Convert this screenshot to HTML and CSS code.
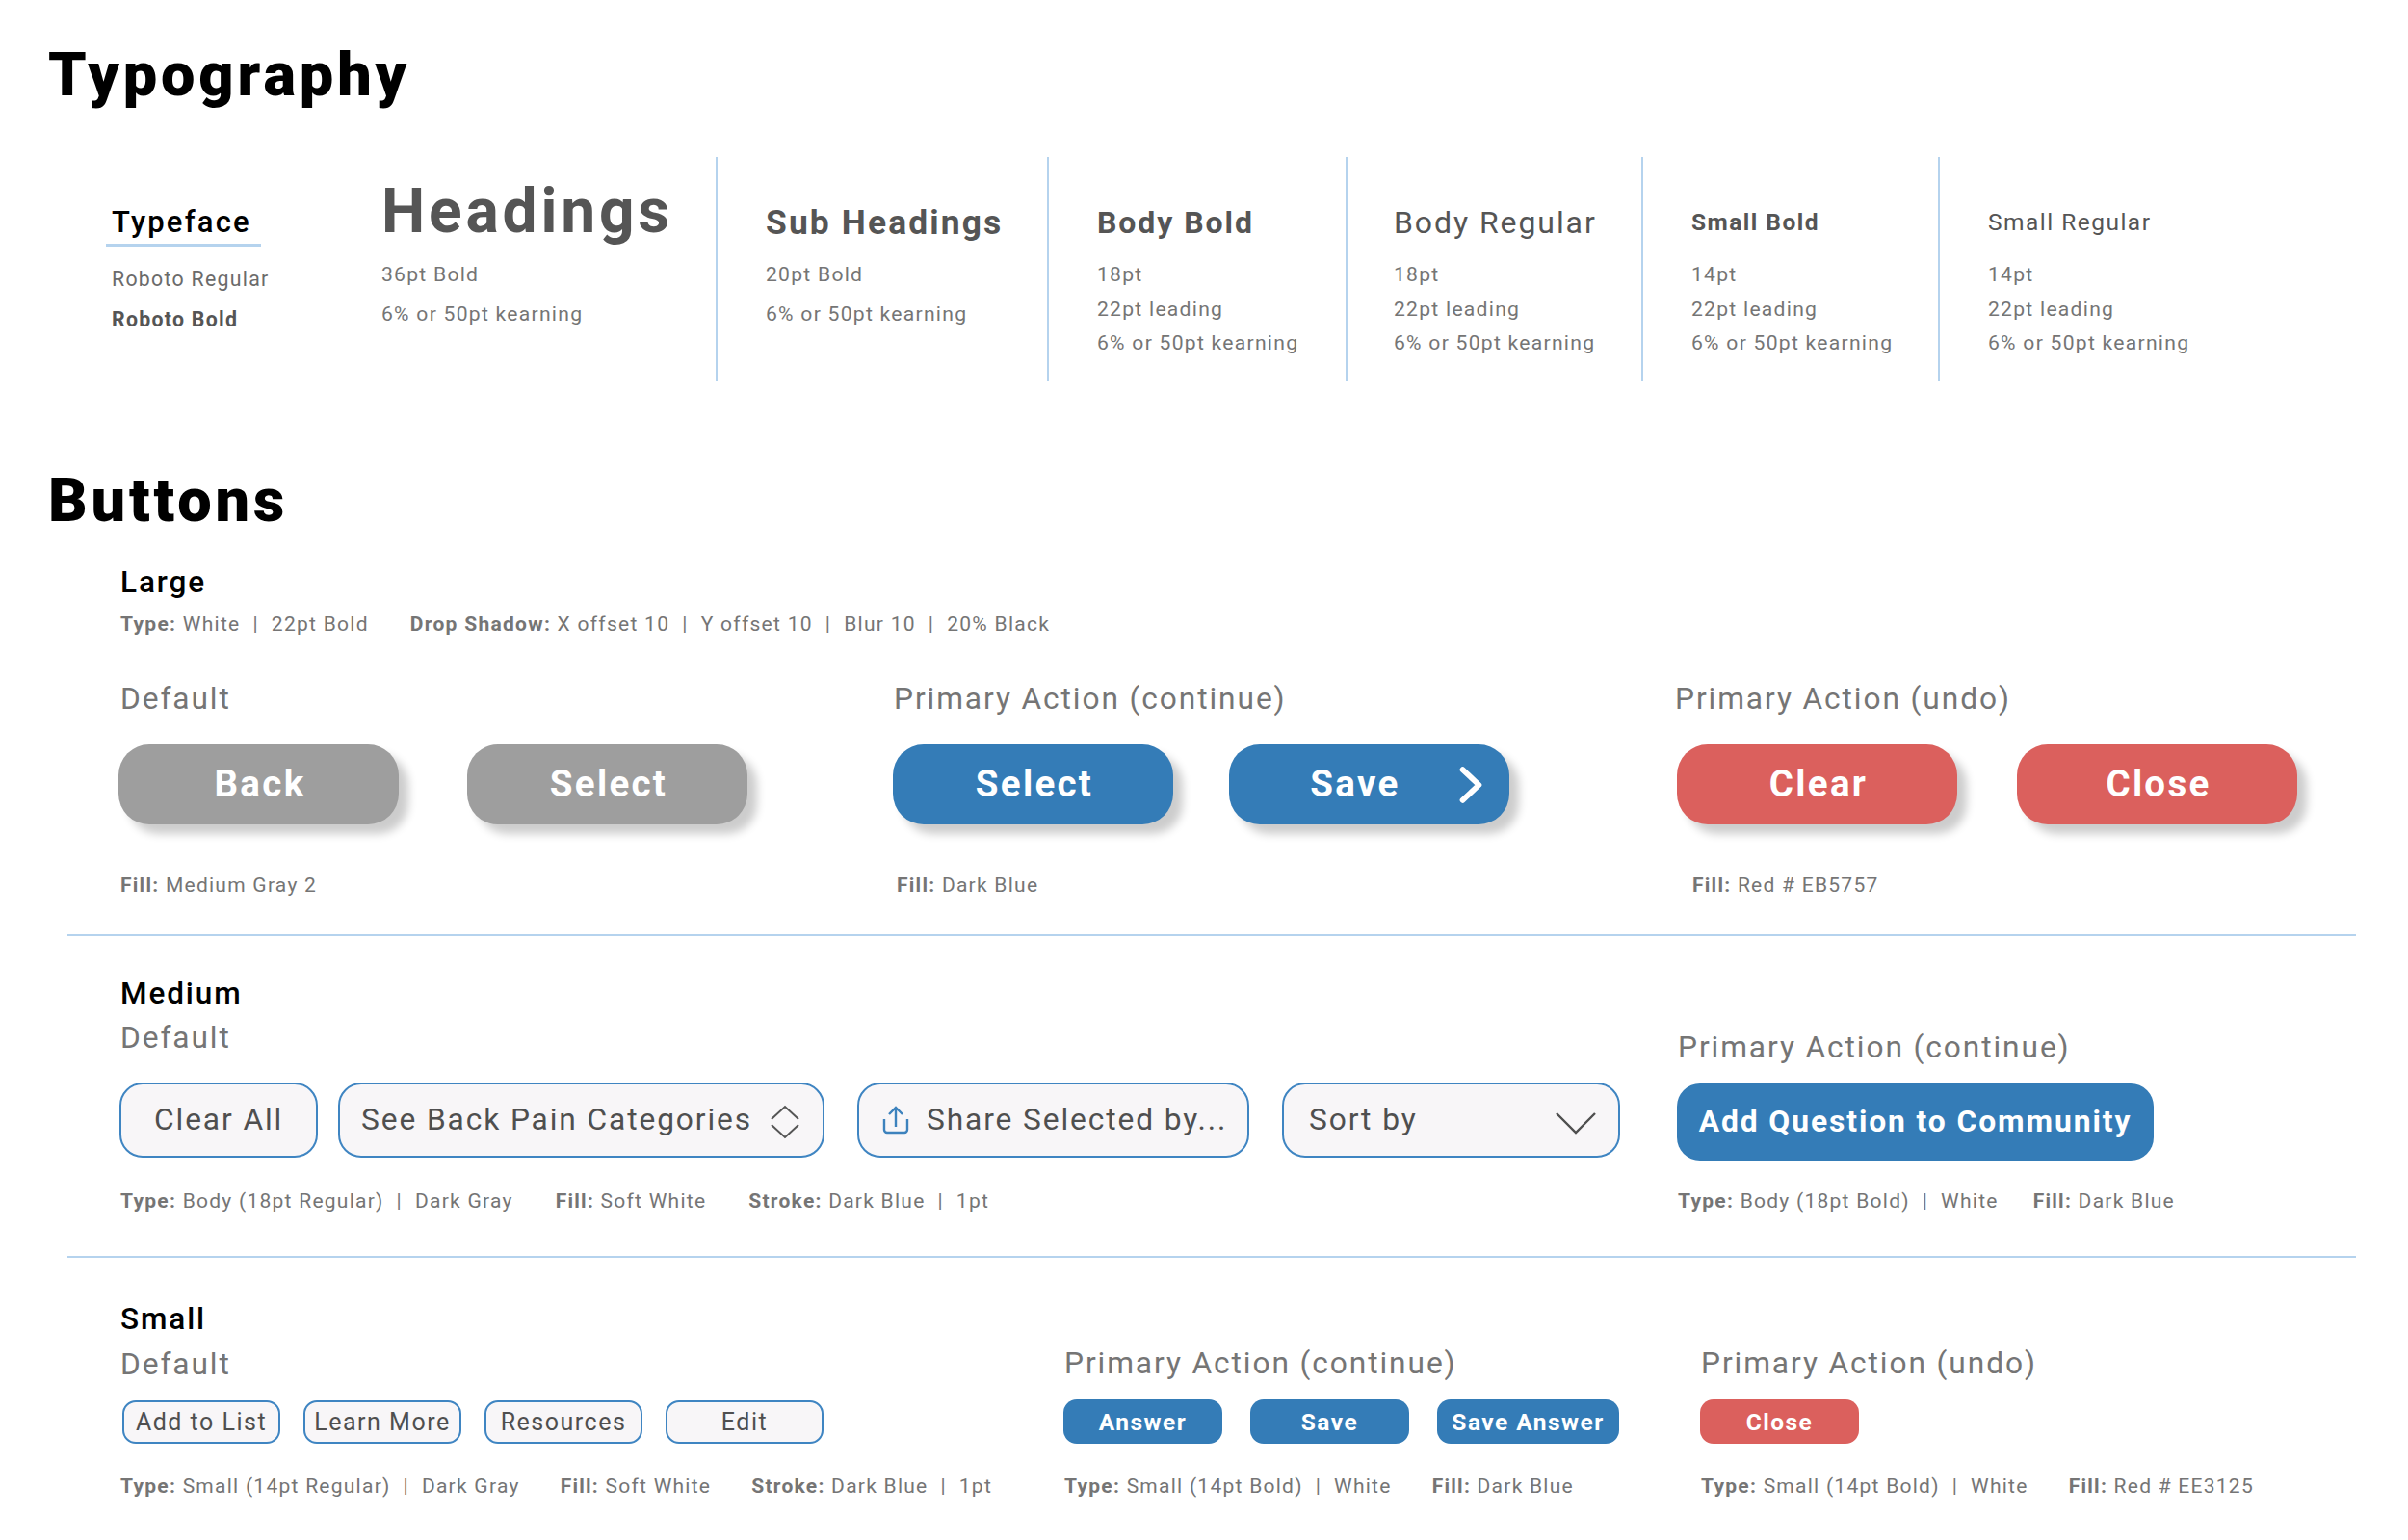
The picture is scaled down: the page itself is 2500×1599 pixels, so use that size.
FILE: index.html
```html
<!DOCTYPE html>
<html lang="en">
<head>
<meta charset="utf-8">
<title>Typography and Buttons</title>
<link rel="stylesheet" href="styles.css">
</head>
<body>
<main class="page">
  <h1 class="title title-first">Typography</h1>
  <section class="type-row">
    <div class="type-col type-face">
      <div class="face-head">Typeface</div>
      <p class="face-line">Roboto Regular</p>
      <p class="face-line face-bold">Roboto Bold</p>
    </div>
    <div class="type-col type-head">
      <div class="sample-h1">Headings</div>
      <p class="spec spec-wide">36pt Bold</p>
      <p class="spec spec-wide">6% or 50pt kearning</p>
    </div>
    <div class="type-col divided">
      <div class="sample-h2">Sub Headings</div>
      <p class="spec spec-wide">20pt Bold</p>
      <p class="spec spec-wide">6% or 50pt kearning</p>
    </div>
    <div class="type-col divided">
      <div class="sample-body sample-bold">Body Bold</div>
      <p class="spec">18pt</p>
      <p class="spec">22pt leading</p>
      <p class="spec">6% or 50pt kearning</p>
    </div>
    <div class="type-col divided divided-tight">
      <div class="sample-body">Body Regular</div>
      <p class="spec">18pt</p>
      <p class="spec">22pt leading</p>
      <p class="spec">6% or 50pt kearning</p>
    </div>
    <div class="type-col divided">
      <div class="sample-small sample-bold">Small Bold</div>
      <p class="spec">14pt</p>
      <p class="spec">22pt leading</p>
      <p class="spec">6% or 50pt kearning</p>
    </div>
    <div class="type-col divided">
      <div class="sample-small">Small Regular</div>
      <p class="spec">14pt</p>
      <p class="spec">22pt leading</p>
      <p class="spec">6% or 50pt kearning</p>
    </div>
  </section>

  <h1 class="title title-second">Buttons</h1>

  <section class="band band-large">
    <h2 class="size-name size-large">Large</h2>
    <p class="note note-top"><span><b>Type:</b> White &nbsp;|&nbsp; 22pt Bold</span><span><b>Drop Shadow:</b> X offset 10 &nbsp;|&nbsp; Y offset 10 &nbsp;|&nbsp; Blur 10 &nbsp;|&nbsp; 20% Black</span></p>
    <div class="large-grid">
      <div>
        <h3 class="state state-default">Default</h3>
        <div class="btns gap-gray">
          <button class="btn-l gray">Back</button>
          <button class="btn-l gray">Select</button>
        </div>
        <p class="note note-l note-first"><span><b>Fill:</b> Medium Gray 2</span></p>
      </div>
      <div>
        <h3 class="state">Primary Action (continue)</h3>
        <div class="btns gap-blue">
          <button class="btn-l blue">Select</button>
          <button class="btn-l blue btn-next">Save
            <svg class="icon-next" viewBox="0 0 24 36" aria-hidden="true"><path d="M4 3 L20 18 L4 33" fill="none" stroke="#fff" stroke-width="5.5" stroke-linecap="round" stroke-linejoin="round"/></svg>
          </button>
        </div>
        <p class="note note-l note-in"><span><b>Fill:</b> Dark Blue</span></p>
      </div>
      <div>
        <h3 class="state state-out">Primary Action (undo)</h3>
        <div class="btns gap-red">
          <button class="btn-l red">Clear</button>
          <button class="btn-l red">Close</button>
        </div>
        <p class="note note-l note-in2"><span><b>Fill:</b> Red # EB5757</span></p>
      </div>
    </div>
  </section>

  <section class="band band-medium">
    <div class="medium-grid">
      <div>
        <h2 class="size-name">Medium</h2>
        <h3 class="state state-tight">Default</h3>
        <div class="btns medium-btns">
          <button class="btn-m w-clear">Clear All</button>
          <button class="btn-m w-see">See Back Pain Categories
            <svg class="icon-updown" viewBox="0 0 30 36" aria-hidden="true"><path d="M1 15 L15 2 L29 15 M1 21 L15 34 L29 21" fill="none" stroke="#555" stroke-width="2"/></svg>
          </button>
          <button class="btn-m w-share">
            <svg class="icon-share" viewBox="0 0 28 30" aria-hidden="true"><path d="M2 14 V25 a3 3 0 0 0 3 3 H23 a3 3 0 0 0 3 -3 V14 M14 22 V2 M7 9 L14 2 L21 9" fill="none" stroke="#3d82bd" stroke-width="2.4"/></svg>
            Share Selected by...
          </button>
          <button class="btn-m w-sort">Sort by
            <svg class="icon-sort" viewBox="0 0 42 24" aria-hidden="true"><path d="M1 2 L21 22 L41 2" fill="none" stroke="#4f4f4f" stroke-width="2.4"/></svg>
          </button>
        </div>
        <p class="note note-m"><span><b>Type:</b> Body (18pt Regular) &nbsp;|&nbsp; Dark Gray</span><span><b>Fill:</b> Soft White</span><span><b>Stroke:</b> Dark Blue &nbsp;|&nbsp; 1pt</span></p>
      </div>
      <div class="end-col">
        <h3 class="state">Primary Action (continue)</h3>
        <button class="btn-m-solid">Add Question to Community</button>
        <p class="note note-m-right"><span><b>Type:</b> Body (18pt Bold) &nbsp;|&nbsp; White</span><span><b>Fill:</b> Dark Blue</span></p>
      </div>
    </div>
  </section>

  <section class="band-small">
    <div class="small-grid">
      <div>
        <h2 class="size-name">Small</h2>
        <h3 class="state state-small">Default</h3>
        <div class="btns small-btns">
          <button class="btn-s">Add to List</button>
          <button class="btn-s">Learn More</button>
          <button class="btn-s">Resources</button>
          <button class="btn-s">Edit</button>
        </div>
        <p class="note note-s"><span><b>Type:</b> Small (14pt Regular) &nbsp;|&nbsp; Dark Gray</span><span><b>Fill:</b> Soft White</span><span><b>Stroke:</b> Dark Blue &nbsp;|&nbsp; 1pt</span></p>
      </div>
      <div class="end-col">
        <h3 class="state">Primary Action (continue)</h3>
        <div class="btns small-solid">
          <button class="btn-s-solid blue">Answer</button>
          <button class="btn-s-solid blue">Save</button>
          <button class="btn-s-solid blue w-answer">Save Answer</button>
        </div>
        <p class="note note-s"><span><b>Type:</b> Small (14pt Bold) &nbsp;|&nbsp; White</span><span><b>Fill:</b> Dark Blue</span></p>
      </div>
      <div class="end-col">
        <h3 class="state">Primary Action (undo)</h3>
        <div class="btns small-solid">
          <button class="btn-s-solid red">Close</button>
        </div>
        <p class="note note-s"><span><b>Type:</b> Small (14pt Bold) &nbsp;|&nbsp; White</span><span><b>Fill:</b> Red # EE3125</span></p>
      </div>
    </div>
  </section>
</main>
</body>
</html>
```
FILE: styles.css
```css
* { box-sizing: border-box; }
html, body { margin: 0; padding: 0; background: #fff; }
body { font-family: Roboto, "Liberation Sans", sans-serif; color: #757575; }
h1, h2, h3, p { margin: 0; font-weight: 400; }
button { font-family: inherit; margin: 0; padding: 0; cursor: pointer; }
.page { width: 2500px; height: 1599px; overflow: hidden; }

.title { font-size: 63px; line-height: 80px; font-weight: 900; color: #000; letter-spacing: .062em; margin-left: 50px; }
.title-first { padding-top: 38px; }
.title-second { margin-top: 84px; }

.type-row { display: grid; grid-template-columns: 280px 347px 344px 310px 307px 308px 1fr; margin: 45px 0 0 116px; height: 233px; }
.type-col { padding-top: 47px; }
.type-head { padding-top: 22px; }
.divided { border-left: 2px solid #b5d3ee; padding-left: 50px; }
.divided-tight { padding-left: 48px; }
.face-head { width: 161px; margin-left: -6px; padding: 1px 0 2px 6px; border-bottom: 3px solid #b5d3ee; margin-bottom: 16px; font-size: 31px; line-height: 40px; font-weight: 500; color: #000; letter-spacing: .07em; }
.face-line { font-size: 21.3px; line-height: 36px; letter-spacing: .06em; color: #6b6b6b; }
.face-bold { font-weight: 700; line-height: 42px; margin-top: 3px; color: #555; }
.sample-h1 { font-size: 64px; line-height: 70px; font-weight: 700; color: #555; letter-spacing: .06em; margin-bottom: 12px; }
.sample-h2 { font-size: 35.4px; line-height: 40px; font-weight: 700; color: #555; letter-spacing: .06em; margin-bottom: 16px; padding-top: 1px; }
.sample-body { font-size: 32px; line-height: 40px; color: #555; letter-spacing: .06em; margin-bottom: 16px; padding-top: 1px; }
.sample-small { font-size: 24.5px; line-height: 40px; color: #555; letter-spacing: .06em; margin-bottom: 16px; padding-top: 1px; }
.sample-bold { font-weight: 700; }
.spec { font-size: 21.1px; line-height: 35.5px; letter-spacing: .06em; color: #757575; }
.spec-wide { line-height: 41px; }
.spec-wide:first-of-type { margin-top: -3px; }

.band { margin: 0 54px 0 70px; border-bottom: 2px solid #b5d3ee; padding-left: 54px; }
.band-large { margin-top: 25px; padding-bottom: 36px; padding-left: 53px; }
.band-medium { padding-top: 40px; padding-bottom: 42px; }
.band-small { margin-left: 124px; padding-top: 44px; }

.size-name { font-size: 31.5px; line-height: 40px; font-weight: 500; color: #000; letter-spacing: .06em; padding-left: 1px; }
.size-large { padding-left: 2px; }
.state { font-size: 31.7px; line-height: 40px; color: #757575; letter-spacing: .06em; padding-left: 1px; }
.state-default { padding-left: 2px; }
.state-tight { margin-top: 6px; }
.state-small { margin-top: 7px; }
.state-out { margin-left: -3px; }

.note { display: flex; font-size: 21px; line-height: 30px; letter-spacing: .06em; color: #757575; padding-left: 1px; }
.note b { font-weight: 700; }
.note-top { margin-top: 8px; gap: 43px; padding-left: 2px; letter-spacing: .061em; }
.note-first { padding-left: 2px; }
.note-l { margin-top: 48px; }
.note-in { padding-left: 4px; }
.note-in2 { padding-left: 16px; }
.note-m { margin-top: 30px; gap: 44px; }
.note-m-right { margin-top: 27px; gap: 36px; }
.note-s { margin-top: 29px; gap: 42px; }

.btns { display: flex; }
.large-grid { display: grid; grid-template-columns: 804px 814px 1fr; margin-top: 43px; }
.gap-gray { gap: 71px; margin-top: 27px; }
.gap-blue { gap: 58px; margin-top: 27px; }
.gap-red { gap: 62px; margin-top: 27px; }

.btn-l { position: relative; width: 291px; height: 83px; border: 0; border-radius: 32px; padding: 0 0 3px 3px; font-size: 38.5px; font-weight: 700; letter-spacing: .06em; color: #fff; box-shadow: 10px 10px 10px rgba(0,0,0,.2); }
.gray { background: #9e9e9e; }
.blue { background: #347cb7; }
.red { background: #db605d; }
.btn-next { padding-right: 32px; }
.icon-next { position: absolute; left: 238px; top: 23px; width: 26px; height: 38px; }

.medium-grid { display: grid; grid-template-columns: 1617px 1fr; }
.end-col { align-self: end; }
.medium-btns { gap: 21px; margin-top: 26px; }
.btn-m { position: relative; height: 78px; background: #f8f6f8; border: 2px solid #3f85c2; border-radius: 24px; padding-bottom: 2px; color: #4f4f4f; font-size: 31.7px; letter-spacing: .06em; text-align: left; white-space: nowrap; }
.w-clear { width: 206px; padding-left: 34px; }
.w-see { width: 505px; padding-left: 22px; margin-right: 13px; }
.w-share { width: 407px; padding-left: 70px; margin-right: 13px; }
.w-sort { width: 351px; padding-left: 26px; }
.icon-updown { position: absolute; left: 447px; top: 21px; width: 30px; height: 36px; }
.icon-share { position: absolute; left: 24px; top: 22px; width: 28px; height: 30px; }
.icon-sort { position: absolute; left: 282px; top: 28px; width: 42px; height: 24px; }
.btn-m-solid { display: block; width: 495px; height: 80px; margin-top: 17px; border: 0; border-radius: 24px; padding-bottom: 2px; background: #347cb7; color: #fff; font-size: 31.8px; font-weight: 700; letter-spacing: .06em; white-space: nowrap; }

.small-grid { display: grid; grid-template-columns: 980px 661px 1fr; }
.small-btns { gap: 24px; margin-top: 17px; padding-left: 3px; }
.btn-s { width: 164px; height: 45px; background: #f8f6f8; border: 2px solid #3f85c2; border-radius: 14px; color: #4f4f4f; font-size: 25px; letter-spacing: .06em; white-space: nowrap; }
.small-solid { gap: 29px; margin-top: 17px; }
.btn-s-solid { width: 165px; height: 46px; border: 0; border-radius: 14px; color: #fff; font-size: 24.5px; font-weight: 700; letter-spacing: .06em; white-space: nowrap; }
.w-answer { width: 189px; }
```
